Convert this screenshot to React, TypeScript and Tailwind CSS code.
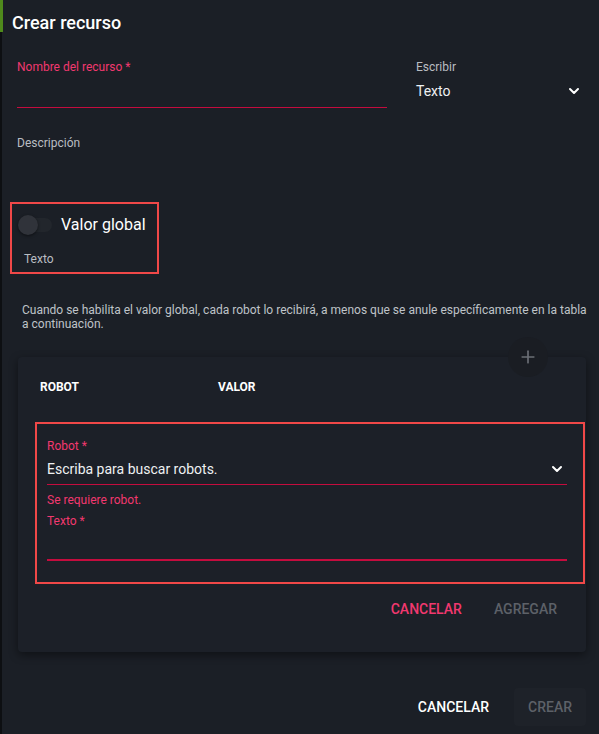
import { ChevronDown, Plus } from "lucide-react";

export default function App() {
  return (
    <div className="relative w-[599px] h-[734px] bg-[#0d0f12] overflow-hidden font-['Roboto',sans-serif]">
      {/* green sliver of the page behind */}
      <div className="absolute left-0 top-0 w-[3px] h-[32px] bg-[#4f8a1c]" />

      <div className="ml-[2px] h-full bg-[#1b1f26] flex flex-col">
        {/* Header */}
        <h2 className="pl-[10px] pt-[12px] h-[44px] text-[18px] font-medium text-white leading-[22px]">
          Crear recurso
        </h2>

        {/* Name + type row */}
        <div className="flex pl-[15px] pr-[14px] pt-[15px]">
          <div className="w-[370px] flex flex-col">
            <label className="text-[12px] leading-[16px] text-[#f2386f]">Nombre del recurso *</label>
            <div className="h-[33px] border-b-[1px] border-[#c40c3e]" />
          </div>
          <div className="ml-[29px] flex-1 flex flex-col">
            <label className="text-[12px] leading-[16px] text-[#b9bdc2]">Escribir</label>
            <div className="mt-[7px] flex items-center justify-between">
              <span className="text-[14px] leading-[18px] text-[#eef0f2]">Texto</span>
              <ChevronDown className="w-[16px] h-[16px] text-white mr-[3px]" strokeWidth={3} />
            </div>
          </div>
        </div>

        {/* Description */}
        <div className="pl-[15px] pt-[27px] text-[12px] leading-[16px] text-[#b9bdc2]">Descripción</div>

        {/* Global value toggle (highlighted) */}
        <div className="ml-[8px] mt-[51px] w-[149px] h-[72px] border-2 border-[#f04848] pl-[6px] pt-[11px]">
          <div className="flex items-center">
            <div className="relative w-[34px] h-[20px] flex items-center">
              <div className="absolute left-[6px] w-[28px] h-[14px] rounded-full bg-[#22262c]" />
              <div className="relative w-[20px] h-[20px] rounded-full bg-[#30333a] shadow-[0_1px_3px_rgba(0,0,0,0.5)]" />
            </div>
            <span className="ml-[9px] text-[16px] leading-[20px] text-white">Valor global</span>
          </div>
          <div className="mt-[16px] pl-[6px] text-[12px] leading-[16px] text-[#b9bdc2]">Texto</div>
        </div>

        {/* Help text */}
        <p className="pl-[20px] pr-[10px] mt-[29px] text-[12px] leading-[14px] text-[#bfc3c8]">
          Cuando se habilita el valor global, cada robot lo recibirá, a menos que se anule específicamente en la tabla a continuación.
        </p>

        {/* Robots table card */}
        <div className="relative ml-[16px] mr-[13px] mt-[26px] h-[295px] rounded-[4px] bg-[#1c2028] shadow-[0_3px_10px_rgba(0,0,0,0.45)]">
          <button className="absolute right-[38px] top-[-20px] w-[40px] h-[40px] rounded-full bg-[#1a1d23] flex items-center justify-center">
            <Plus className="w-[20px] h-[20px] text-[#6b6f76]" strokeWidth={2} />
          </button>

          <div className="flex pt-[23px] pl-[22px] text-[12px] leading-[14px] font-bold text-white">
            <span className="w-[178px]">ROBOT</span>
            <span>VALOR</span>
          </div>

          {/* Add row form (highlighted) */}
          <div className="ml-[17px] mr-[1px] mt-[28px] h-[162px] border-2 border-[#f04848] pl-[10px] pr-[16px] pt-[15px]">
            <label className="block text-[12px] leading-[14px] text-[#f2386f]">Robot *</label>
            <div className="mt-[7px] h-[25px] flex items-start justify-between border-b-[1px] border-[#c40c3e]">
              <span className="text-[14px] leading-[18px] text-[#eef0f2]">Escriba para buscar robots.</span>
              <ChevronDown className="w-[16px] h-[16px] text-white mr-[2px] mt-[1px]" strokeWidth={3} />
            </div>
            <div className="mt-[8px] text-[12px] leading-[14px] text-[#f2386f]">Se requiere robot.</div>
            <label className="block mt-[7px] text-[12px] leading-[14px] text-[#f2386f]">Texto *</label>
            <div className="h-[33px] border-b-2 border-[#c40c3e]" />
          </div>

          <div className="flex justify-end items-center gap-[32px] pr-[29px] mt-[17px] text-[14px] leading-[16px] font-medium">
            <button className="text-[#f2386f]">CANCELAR</button>
            <button className="text-[#5d6168]">AGREGAR</button>
          </div>
        </div>

        {/* Dialog actions */}
        <div className="mt-[36px] flex justify-end items-center pr-[13px]">
          <button className="text-[14px] font-medium text-white mr-[25px]">CANCELAR</button>
          <button className="w-[72px] h-[38px] rounded-[4px] bg-[#1e2229] text-[14px] font-medium text-[#5d6168]">CREAR</button>
        </div>
      </div>
    </div>
  );
}
